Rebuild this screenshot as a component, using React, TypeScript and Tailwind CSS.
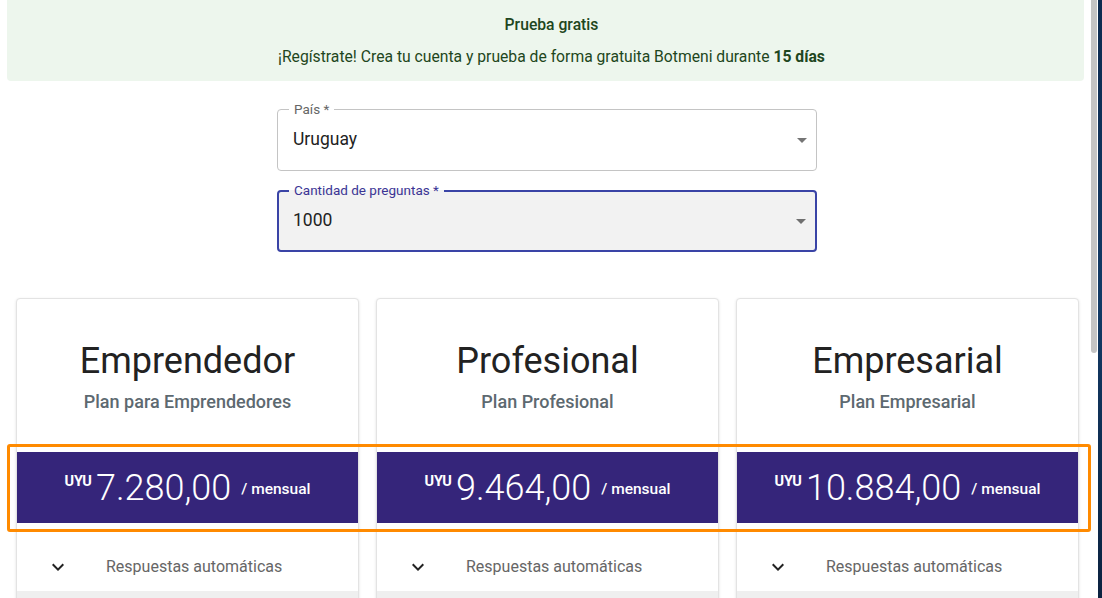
import React from 'react';

interface Plan {
  name: string;
  subtitle: string;
  price: string;
}

const plans: Plan[] = [
  { name: 'Emprendedor', subtitle: 'Plan para Emprendedores', price: '7.280,00' },
  { name: 'Profesional', subtitle: 'Plan Profesional', price: '9.464,00' },
  { name: 'Empresarial', subtitle: 'Plan Empresarial', price: '10.884,00' },
];

function ArrowDrop() {
  return (
    <svg className="w-6 h-6 absolute right-[2px] top-1/2 -translate-y-1/2" viewBox="0 0 24 24" fill="rgba(0,0,0,0.54)">
      <path d="M7 10l5 5 5-5z" />
    </svg>
  );
}

function SelectField({ label, value, focused }: { label: string; value: string; focused?: boolean }) {
  return (
    <div
      className={
        focused
          ? 'relative h-[62px] rounded-[4px] border-2 border-[#3a44a6] bg-[#f2f2f2] flex items-center pl-[14px]'
          : 'relative h-[62px] rounded-[4px] border border-[#c4c4c4] bg-white flex items-center pl-[15px]'
      }
    >
      <span
        className={
          focused
            ? 'absolute left-[10px] -top-[10px] px-[5px] text-[13.5px] leading-4 text-[#3b3595] bg-[linear-gradient(to_bottom,white_50%,#f2f2f2_50%)]'
            : 'absolute left-[11px] -top-[9px] px-[5px] text-[13.5px] leading-4 text-[#666] bg-white'
        }
      >
        {label}
      </span>
      <span className="text-[17.5px] text-[#222] -mt-[1px]">{value}</span>
      <ArrowDrop />
    </div>
  );
}

function PlanCard({ plan }: { plan: Plan }) {
  return (
    <div className="w-[343px] rounded-[4px] border border-[#e3e3e3] shadow-[0_1px_3px_rgba(0,0,0,0.12)] bg-white flex flex-col overflow-hidden">
      <div className="pt-[40px] text-center text-[36px] leading-[44px] text-[#222]">{plan.name}</div>
      <div className="mt-[7px] text-center text-[18px] leading-6 font-medium text-[#5d6970]">{plan.subtitle}</div>
      <div className="mt-[38px] h-[71px] bg-[#35257a] text-white flex items-center justify-center">
        <span className="text-[14.5px] font-bold self-start mt-[19px] mr-[4px]">UYU</span>
        <span className="text-[36px] font-light leading-none">{plan.price}</span>
        <span className="text-[15.5px] font-medium ml-[10px] mt-[5px]">/ mensual</span>
      </div>
      <div className="h-[68px] flex items-start pt-[32px]">
        <svg className="w-6 h-6 ml-[29px]" viewBox="0 0 24 24" fill="#222">
          <path d="M16.59 8.59 12 13.17 7.41 8.59 6 10l6 6 6-6z" />
        </svg>
        <span className="ml-[36px] text-[16px] leading-6 text-[#666]">Respuestas automáticas</span>
      </div>
      <div className="h-[20px] bg-[#efefef]" />
    </div>
  );
}

export default function App() {
  return (
    <div className="w-[1102px] h-[598px] overflow-hidden flex bg-white" style={{ fontFamily: 'Roboto, "Liberation Sans", sans-serif' }}>
      <div className="relative w-[1091px] shrink-0">
        <div className="mx-[7px] h-[81px] rounded-b-[4px] bg-[#edf6ed] text-[#1e4620] text-[15.7px] flex flex-col items-center pt-[14px] pl-[12px] gap-[10px]">
          <div className="leading-[22px] font-medium">Prueba gratis</div>
          <div className="leading-[22px]">
            ¡Regístrate! Crea tu cuenta y prueba de forma gratuita Botmeni durante <span className="font-bold">15 días</span>
          </div>
        </div>

        <div className="ml-[277px] w-[540px] mt-[28px] flex flex-col gap-[19px]">
          <SelectField label="País *" value="Uruguay" />
          <SelectField label="Cantidad de preguntas *" value="1000" focused />
        </div>

        <div className="ml-[16px] mt-[46px] flex gap-[17px]">
          {plans.map((plan) => (
            <PlanCard key={plan.name} plan={plan} />
          ))}
        </div>

        <div className="absolute left-[7px] top-[444px] w-[1084px] h-[88px] border-[3px] border-[#ff8a00] rounded-[3px] pointer-events-none" />
      </div>

      <div className="w-[7px] shrink-0 bg-white">
        <div className="h-[353px] w-[6px] rounded-b-[3px] bg-[#c4c4c4]" />
      </div>
      <div className="flex-1 bg-[linear-gradient(to_bottom,#0d2a4f,#123a66,#0b2240)]" />
    </div>
  );
}
